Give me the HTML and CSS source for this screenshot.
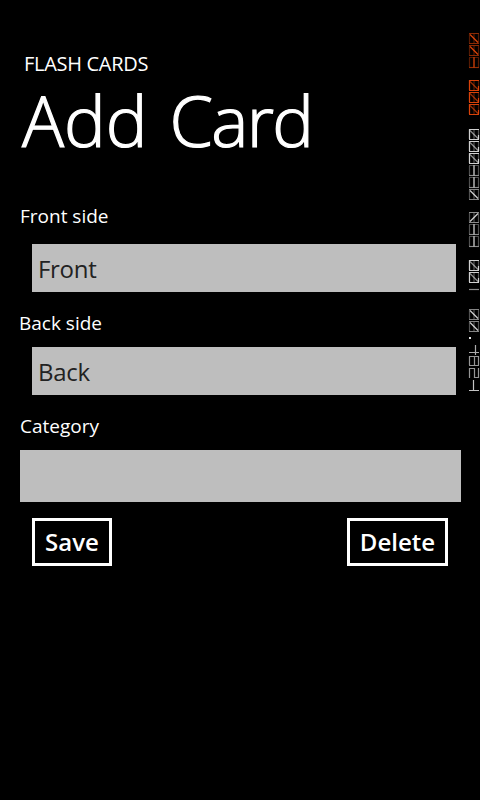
FILE: index.html
```
<!DOCTYPE html>
<html lang="en">
<head>
<meta charset="utf-8">
<title>Flash Cards</title>
<link rel="stylesheet" href="styles.css">
</head>
<body>
<main class="page">
  <header class="header">
    <p class="app-name">FLASH CARDS</p>
    <h1 class="title">Add <span class="title-noun">Card</span></h1>
  </header>
  <form class="form">
    <label class="label label-front" for="front">Front side</label>
    <input class="field" id="front" type="text" value="Front">
    <label class="label label-back" for="back">Back side</label>
    <input class="field" id="back" type="text" value="Back">
    <label class="label label-category" for="category">Category</label>
    <input class="picker" id="category" type="text">
    <div class="actions">
      <button class="button save" type="button">Save</button>
      <button class="button delete" type="button">Delete</button>
    </div>
  </form>
</main>
<svg class="counters" width="12" height="400" viewBox="468 0 12 400" fill="none" aria-hidden="true">
  <defs>
    <g id="cell"><path d="M1 .5H11M1 10.5H11M1.500 1V10M10.500 1V10M6 1V10" opacity=".35"/></g>
    <g id="zero"><use href="#cell"/><path d="M1 .5H11M1 10.5H11" opacity=".35"/><path d="M2 1.500L10 9.500" opacity=".9"/></g>
    <g id="three"><use href="#cell"/><path d="M6 0V10.500" opacity=".8"/><path d="M1 10.500H11" opacity=".4"/></g>
    <g id="box"><use href="#cell"/><path d="M1.500 10V.500H11M1 10.500H11M10.500 6V10" opacity=".85"/><path d="M2 1.500L10 9.500" opacity=".6"/></g>
    <g id="slash"><use href="#cell"/><path d="M1 .5H11M1 10.5H11" opacity=".4"/><path d="M2 9.500L10 1.500" opacity=".9"/></g>
  </defs>
  <g class="warm">
    <use href="#zero" x="468" y="33"/><use href="#zero" x="468" y="45"/><use href="#three" x="468" y="57"/>
    <use href="#box" x="468" y="80"/><use href="#box" x="468" y="92"/><use href="#box" x="468" y="104"/>
  </g>
  <g class="cool">
    <use href="#box" x="468" y="129"/><use href="#box" x="468" y="141"/><use href="#box" x="468" y="153"/>
    <use href="#three" x="468" y="165"/><use href="#three" x="468" y="177"/><use href="#zero" x="468" y="189"/>
    <use href="#slash" x="468" y="212"/><use href="#three" x="468" y="224"/><use href="#three" x="468" y="236"/>
    <use href="#box" x="468" y="260"/><use href="#box" x="468" y="272"/><path d="M469 289.500H479" opacity=".6"/>
    <use href="#zero" x="468" y="309"/><use href="#zero" x="468" y="321"/><path d="M469 338H471" stroke-width="2"/>
    <path d="M475.500 345V355M469 352.500H479" opacity=".75"/>
    <path d="M469.500 356V365M478.500 356V365M474.500 356V365M469 356.500H479M469 365.500H479" opacity=".65"/>
    <path d="M469 368.500H474.500V377.500H479M469.500 368V378M478.500 368V378" opacity=".65"/>
    <path d="M473.500 380V390M469 390.500H479" opacity=".85"/>
  </g>
</svg>
</body>
</html>
```
FILE: styles.css
```
* { box-sizing: border-box; }

body {
  margin: 0;
  background: #000;
  color: #fff;
  font-family: "Open Sans", "Noto Sans", sans-serif;
}

.page {
  width: 480px;
  height: 800px;
  overflow: hidden;
  padding: 50px 19px 0 20px;
}

.header {
  height: 154px;
}

.app-name {
  margin: 0 0 0 4px;
  font-size: 20px;
  line-height: 28px;
  letter-spacing: -0.3px;
}

.title {
  margin: 6px 0 0 2px;
  font-size: 70px;
  line-height: 72px;
  font-weight: 300;
  white-space: nowrap;
  word-spacing: 4px;
  -webkit-text-stroke: 1.2px #fff;
}

.title-noun { letter-spacing: -1.7px; }

.form {
  display: flex;
  flex-direction: column;
}

.label {
  font-size: 19px;
  line-height: 24px;
}

.label-front { margin-bottom: 16px; }
.label-back { margin: 19px 0 12px -1px; }
.label-category { margin: 19px 0 12px; }

.field,
.picker {
  border: 0;
  border-radius: 0;
  outline: 0;
  background: #bebebe;
  color: #222;
  font-family: inherit;
  font-size: 24px;
}

.field {
  width: 424px;
  height: 48px;
  margin-left: 12px;
  padding: 0 6px;
  letter-spacing: -0.3px;
}

.picker {
  width: 441px;
  height: 52px;
}

.actions {
  display: flex;
  justify-content: space-between;
  margin: 16px 13px 0 12px;
}

.button {
  height: 48px;
  padding: 0 0 1px;
  border: 3px solid #fff;
  background: #000;
  color: #fff;
  font-family: inherit;
  font-size: 24px;
  font-weight: 600;
}

.save { width: 80px; }
.delete { width: 101px; }

.counters {
  position: absolute;
  top: 0;
  left: 468px;
}

.warm { stroke: #f04a0a; stroke-width: 1.2; }
.cool { stroke: #e6e6e6; stroke-width: 1.2; }
```
